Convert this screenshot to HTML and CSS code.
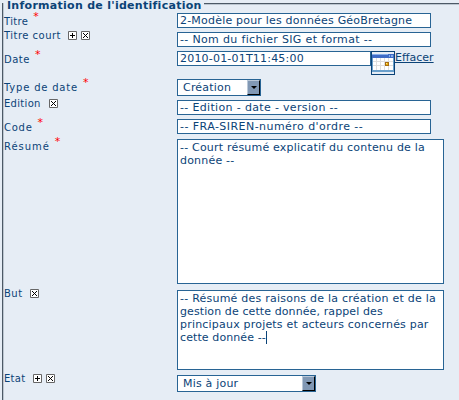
FILE: index.html
```html
<!DOCTYPE html>
<html lang="fr">
<head>
<meta charset="utf-8">
<title>Information de l'identification</title>
<link rel="stylesheet" href="styles.css">
</head>
<body>
<svg class="defs" width="0" height="0" aria-hidden="true">
  <symbol id="plus" viewBox="0 0 9 9"><path fill="#fff" stroke="#666" d="M.5.5h8v8h-8z"/><path d="M4 2h1v2h2v1H5v2H4V5H2V4h2z"/></symbol>
  <symbol id="cross" viewBox="0 0 9 9"><path fill="#fff" stroke="#666" d="M.5.5h8v8h-8z"/><path d="M2 2h1v1H2zM6 2h1v1H6zM3 3h1v1H3zM5 3h1v1H5zM4 4h1v1H4zM3 5h1v1H3zM5 5h1v1H5zM2 6h1v1H2zM6 6h1v1H6z"/></symbol>
</svg>
<section class="group">
  <h1 class="legend"><span>Information de l'identification</span></h1>
  <div class="row titre"><div class="label low">Titre<sup>*</sup></div><div class="field">2-Modèle pour les données GéoBretagne</div></div>
  <div class="row court"><div class="label high">Titre court<svg class="tool first"><use href="#plus"/></svg><svg class="tool"><use href="#cross"/></svg></div><div class="field wide">-- Nom du fichier SIG et format --</div></div>
  <div class="row date"><div class="label low">Date<sup>*</sup></div><div class="field short">2010-01-01T11:45:00</div>
    <svg class="calendar" viewBox="0 0 24 24" shape-rendering="crispEdges"><path fill="#e6edf5" stroke="#0b4377" d="M.5.5h23v23H.5z"/><path fill="#699fcb" d="M1 3h22v18H1z"/><path fill="#3e6bc6" d="M1 3h22v4H1z"/><path fill="#86aeea" d="M1 3h16v1H1zM18 4h1v2h-1zM20 4h2v2h-2z"/><path fill="#fff" d="M2 7h20v12H2z"/><path fill="none" stroke="#dedede" d="M5.500 7v12M9.500 7v12M13.500 7v12M17.500 7v12M2 10.500h20M2 14.500h20"/><path fill="#edb50c" stroke="#a76c12" d="M14.500 11.500h3v3h-3z"/><path fill="#ffe88a" d="M15 12h1v1h-1z"/></svg>
    <a class="clear">Effacer</a></div>
  <div class="row type"><div class="label low">Type de date<sup>*</sup></div><div class="select small"><span>Création</span><i class="arrow"></i></div></div>
  <div class="row edition"><div class="label high">Edition<svg class="tool first"><use href="#cross"/></svg></div><div class="field wide">-- Edition - date - version --</div></div>
  <div class="row code"><div class="label low">Code<sup>*</sup></div><div class="field wider">-- FRA-SIREN-numéro d'ordre --</div></div>
  <div class="row resume"><div class="label mid">Résumé<sup>*</sup></div><div class="area">-- Court résumé explicatif du contenu de la<br>donnée --</div></div>
  <div class="row but"><div class="label high">But<svg class="tool first"><use href="#cross"/></svg></div><div class="area"><span class="roomy">-- Résumé des raisons de la création et de la</span><br><span class="tight">gestion de cette donnée, rappel des</span><br>principaux projets et acteurs concernés par<br><span class="tight">cette donnée --</span><i class="caret"></i></div></div>
  <div class="row etat"><div class="label high">Etat<svg class="tool first"><use href="#plus"/></svg><svg class="tool"><use href="#cross"/></svg></div><div class="select"><span>Mis à jour</span><i class="arrow"></i></div></div>
</section>
</body>
</html>
```
FILE: styles.css
```css
* { box-sizing: border-box; }
body { margin: 0; height: 400px; overflow: hidden; background: #e6edf5; color: #0b4377; font: 11px/13px "DejaVu Sans", sans-serif; }
.defs { display: block; position: absolute; }
.group { height: 397px; margin: 3px 0 0 2px; border-left: 1px solid #4c5966; box-shadow: inset 1px 0 #bcc6d0; padding-left: 1px; }
.legend { margin: 0; height: 10px; display: flex; align-items: flex-start; font-size: 11px; line-height: 13px; font-weight: bold; letter-spacing: .28px; white-space: nowrap; }
.legend span { margin: -4px 2px 0 3px; }
.legend::after { content: ""; flex: 1; border-top: 1px solid #4c5966; border-bottom: 1px solid #bcc6d0; }
.row { display: flex; align-items: flex-start; }
.label { width: 173px; height: 12px; flex: none; display: flex; align-items: center; font-size: 10px; line-height: 12px; letter-spacing: .5px; white-space: nowrap; }
.low { margin-top: 3px; }
.mid { margin-top: 2px; }
.high { margin-top: -2px; }
sup { color: #f00; font-size: 11px; line-height: 8px; margin: -10px 0 0 5px; letter-spacing: 0; }
.tool { width: 9px; height: 9px; margin-left: 4px; margin-top: -2px; }
.tool.first { margin-left: 7px; }
.titre .label { letter-spacing: .35px; }
.court .label { letter-spacing: .48px; }
.edition .label { letter-spacing: .3px; }
.edition .tool.first { margin-left: 8px; }
.type .label { letter-spacing: .8px; }
.resume .label { letter-spacing: .95px; }
.code .label { letter-spacing: .75px; }
.etat .label { letter-spacing: .3px; }
.field, .area, .select { border: 1px solid #286494; background: #fff; white-space: nowrap; letter-spacing: .2px; }
.field { width: 254px; height: 15px; padding-left: 2px; }
.wide { letter-spacing: .34px; }
.wider { letter-spacing: .45px; }
.short { width: 194px; }
.area { width: 267px; height: 145px; padding: 1px 2px; }
.roomy { letter-spacing: .23px; }
.tight { letter-spacing: .1px; }
.but .area { height: 80px; }
.select { width: 139px; height: 17px; padding-left: 5px; display: flex; line-height: 16px; }
.small { width: 84px; }
.arrow { margin-left: auto; width: 13px; height: 15px; background: #8198b4; border: 1px solid; border-color: #bac8d8 #000 #000 #bac8d8; display: flex; align-items: center; justify-content: center; }
.arrow::after { content: ""; border: solid transparent; border-width: 3px 3px 0; border-top-color: #000; }
.calendar { width: 24px; height: 24px; flex: none; }
.clear { text-decoration: underline; }
.caret { display: inline-block; width: 1px; height: 13px; background: #0b4377; vertical-align: top; }
.titre, .court { height: 19px; }
.date { height: 28px; }
.type { height: 21px; }
.edition { height: 19px; }
.code { height: 20px; }
.resume { height: 151px; }
.but { height: 85px; }
```
